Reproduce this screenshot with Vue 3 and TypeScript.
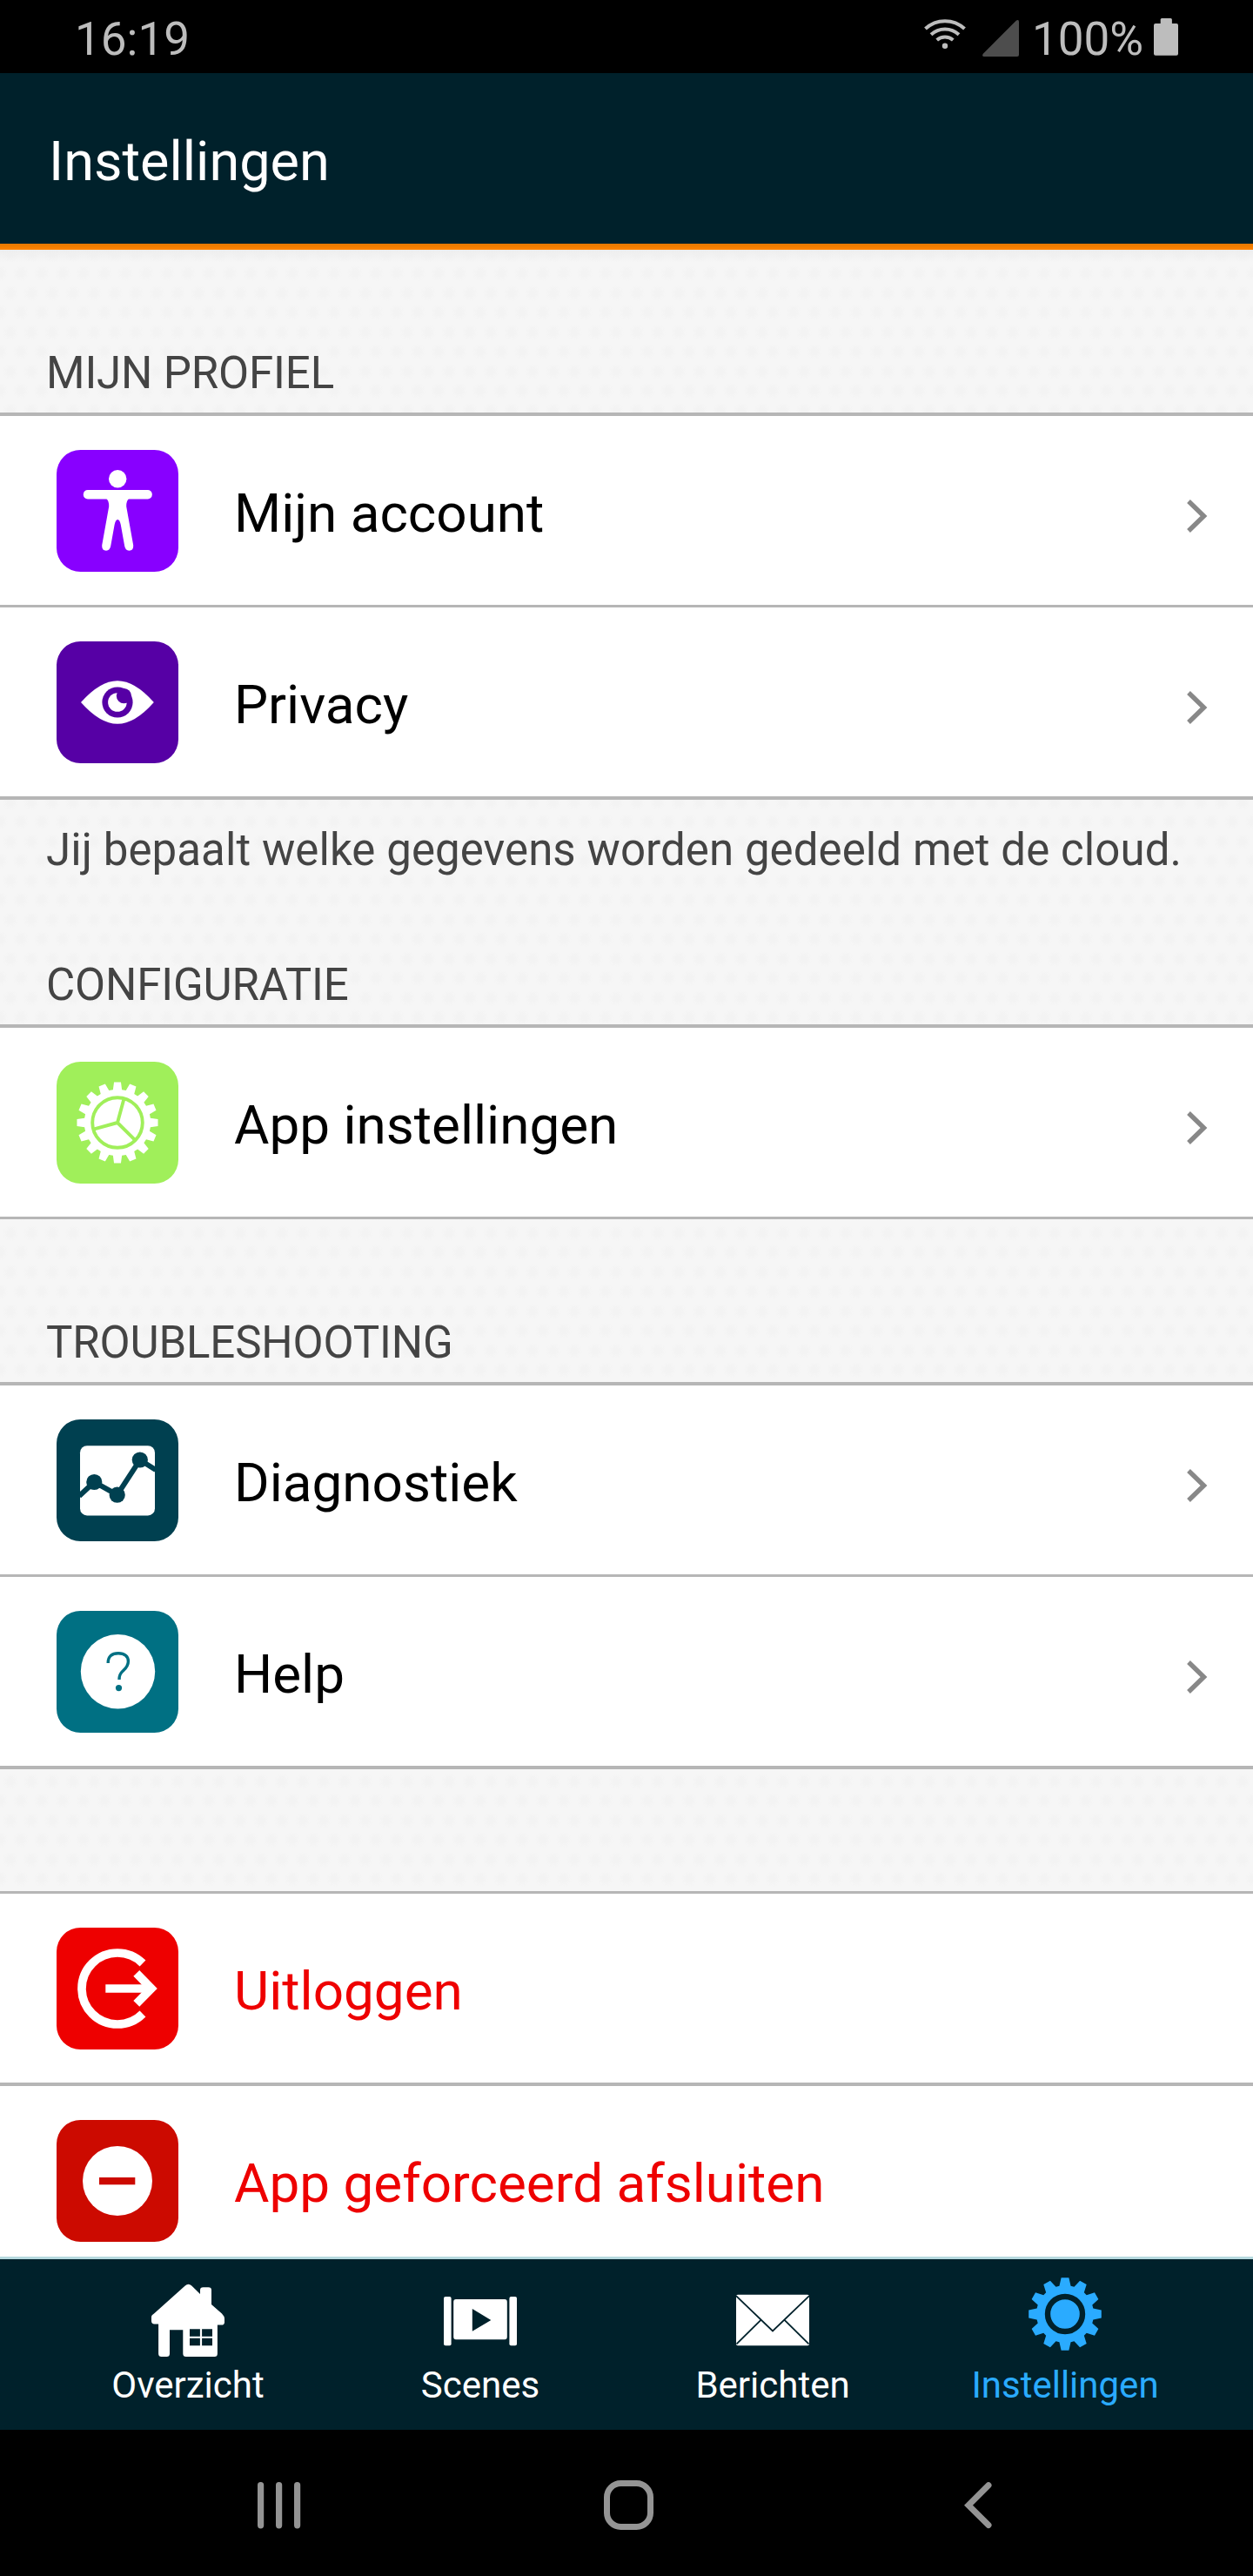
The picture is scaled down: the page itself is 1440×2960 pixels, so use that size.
<script setup lang="ts">
type IconName = 'person' | 'eye' | 'gear' | 'chart' | 'help' | 'logout' | 'minus'

interface Row {
  label: string
  icon: IconName
  color: string
  danger?: boolean
}

interface Section {
  id: string
  title?: string
  note?: string
  rows: Row[]
}

const sections: Section[] = [
  {
    id: 'profile',
    title: 'MIJN PROFIEL',
    note: 'Jij bepaalt welke gegevens worden gedeeld met de cloud.',
    rows: [
      { label: 'Mijn account', icon: 'person', color: '#8800ff' },
      { label: 'Privacy', icon: 'eye', color: '#5600a5' },
    ],
  },
  {
    id: 'config',
    title: 'CONFIGURATIE',
    rows: [{ label: 'App instellingen', icon: 'gear', color: '#a0ef5a' }],
  },
  {
    id: 'trouble',
    title: 'TROUBLESHOOTING',
    rows: [
      { label: 'Diagnostiek', icon: 'chart', color: '#004050' },
      { label: 'Help', icon: 'help', color: '#007083' },
    ],
  },
  {
    id: 'session',
    rows: [
      { label: 'Uitloggen', icon: 'logout', color: '#ee0000', danger: true },
      { label: 'App geforceerd afsluiten', icon: 'minus', color: '#cc0a00', danger: true },
    ],
  },
]

const tabs = [
  { id: 'home', label: 'Overzicht' },
  { id: 'scenes', label: 'Scenes' },
  { id: 'mail', label: 'Berichten' },
  { id: 'settings', label: 'Instellingen' },
]

// Outline of a cog wheel: trapezoid teeth on a round body.
function cog(cx: number, cy: number, teeth: number, outer: number, inner: number, top: number, base: number): string {
  const points: string[] = []
  const at = (r: number, a: number) =>
    points.push(`${(cx + r * Math.sin(a)).toFixed(2)},${(cy - r * Math.cos(a)).toFixed(2)}`)
  for (let i = 0; i < teeth; i++) {
    const a = (i * 2 * Math.PI) / teeth
    at(inner, a - base)
    at(outer, a - top)
    at(outer, a + top)
    at(inner, a + base)
  }
  return points.join(' ')
}

const appCog = cog(70, 70, 16, 46.7, 38.2, 0.085, 0.135)
const tabCog = cog(42, 35, 12, 42, 33, 0.105, 0.2)
</script>

<template>
  <div class="phone">
    <div class="status">
      <span class="clock">16:19</span>
      <svg class="wifi" width="48" height="36" viewBox="0 0 48 36" fill="none" stroke="#bdbdbd" stroke-width="4">
        <path d="M1.5 12 A33 33 0 0 1 46.5 12" />
        <path d="M8 18.8 A23.5 23.5 0 0 1 40 18.8" />
        <path d="M14.7 25 A14 14 0 0 1 33.3 25" />
        <circle cx="24" cy="31.8" r="3.2" fill="#bdbdbd" stroke="none" />
      </svg>
      <svg class="signal" width="42" height="42" viewBox="0 0 42 42">
        <path d="M39 0.5 Q42 -1 42 2 V40 Q42 42 40 42 H2 Q-1 42 0.8 38.8Z" fill="#4d4d4d" />
      </svg>
      <span class="percent">100%</span>
      <svg class="battery" width="28" height="43" viewBox="0 0 28 43" fill="#bdbdbd">
        <rect x="7.7" y="0" width="13.2" height="10" rx="1.5" />
        <rect x="0" y="6" width="28" height="36.7" rx="2" />
      </svg>
    </div>

    <header class="bar"><h1>Instellingen</h1></header>

    <main class="content">
      <section v-for="s in sections" :key="s.id" :class="['section', s.id]">
        <h2 v-if="s.title">{{ s.title }}</h2>
        <ul>
          <li v-for="row in s.rows" :key="row.label" :class="{ danger: row.danger }">
            <svg class="icon" width="140" height="140" viewBox="0 0 140 140">
              <rect width="140" height="140" rx="27.5" :fill="row.color" />
              <g v-if="row.icon === 'person'" fill="#fff">
                <circle cx="70.2" cy="33.2" r="10.2" />
                <rect x="30.8" y="46" width="79" height="10.5" rx="5" />
                <path d="M56 55 Q60.4 57.5 60.2 65 L52.2 109.5 Q51.8 115.7 57 115.7 Q61.5 115.7 62.3 110 L66.6 86 Q67.8 80 70.2 80 Q72.6 80 73.8 86 L78.1 110 Q78.9 115.7 83.4 115.7 Q88.6 115.7 88.2 109.5 L80.2 65 Q80 57.5 84.4 55Z" />
              </g>
              <g v-else-if="row.icon === 'eye'">
                <path d="M28 70 Q50 45.2 70 45.2 Q90 45.2 111.8 70 Q90 94.8 70 94.8 Q50 94.8 28 70Z" fill="#fff" />
                <circle cx="70" cy="70" r="17.6" :fill="row.color" />
                <circle cx="69.9" cy="70" r="10.8" fill="#fff" />
                <circle cx="77.4" cy="62.6" r="8.6" :fill="row.color" />
              </g>
              <g v-else-if="row.icon === 'gear'">
                <polygon :points="appCog" fill="#fff" />
                <g fill="none" :stroke="row.color" stroke-width="3.9">
                  <circle cx="70" cy="70" r="28.8" />
                  <path d="M70 70 L77.5 42.5 M70 70 L42.4 77.6 M70 70 L90.6 90.3" />
                </g>
              </g>
              <g v-else-if="row.icon === 'chart'">
                <rect x="27" y="30.2" width="86" height="80.2" rx="8" fill="#fff" />
                <path d="M26 88 L43.3 72 L69.7 86.7 L95.8 46.5 L114 58" fill="none" :stroke="row.color" stroke-width="6" />
                <g :fill="row.color">
                  <circle cx="43.3" cy="72" r="9.1" />
                  <circle cx="69.7" cy="86.7" r="9.1" />
                  <circle cx="95.8" cy="46.5" r="9.1" />
                </g>
              </g>
              <g v-else-if="row.icon === 'help'">
                <circle cx="70.5" cy="69.7" r="42.7" fill="#fff" />
                <path d="M59.2 60 C59 52.5 63.5 48.7 71 48.7 C78.5 48.7 82.4 52.5 82.4 58 C82.4 63.5 79.5 66 76.5 68.8 C73 72 72 74 72 79" fill="none" :stroke="row.color" stroke-width="3.4" />
                <circle cx="71.5" cy="88.6" r="3.6" :fill="row.color" />
              </g>
              <g v-else-if="row.icon === 'logout'" fill="none" stroke="#fff" stroke-width="9.7">
                <path d="M99 41 A41 41 0 1 0 99 99" />
                <path d="M56.3 70 H108" />
                <path d="M91.8 52.4 L109 69.9 L91.8 87.4" />
              </g>
              <g v-else>
                <circle cx="70" cy="70" r="40" fill="#fff" />
                <rect x="49" y="66" width="41.3" height="8.3" :fill="row.color" />
              </g>
            </svg>
            <span class="label">{{ row.label }}</span>
            <svg v-if="!row.danger" class="chevron" width="24" height="40" viewBox="0 0 24 40" fill="none" stroke="#888" stroke-width="5.4">
              <path d="M2 3 L19.5 20 L2 37" />
            </svg>
          </li>
        </ul>
        <p v-if="s.note">{{ s.note }}</p>
      </section>
    </main>

    <nav class="tabs">
      <div v-for="tab in tabs" :key="tab.id" :class="['tab', { active: tab.id === 'settings' }]">
        <svg width="84" height="84" viewBox="0 0 84 84" fill="#fff">
          <template v-if="tab.id === 'home'">
            <path fill-rule="evenodd" d="M38.7 2.6 Q42.5 -1 46.3 2.6 L56 12 V7.5 Q56 4.3 59.5 4.3 H65.5 Q69 4.3 69 7.5 V24 L81 34.5 Q84 37.5 84 40.5 V44.5 Q84 47.6 80.5 47.6 H75.9 V80.5 Q75.9 84 72.5 84 H39.8 Q36.3 84 36.3 80.5 V53.3 H21 V80.5 Q21 84 17.5 84 H11.6 Q8.1 84 8.1 80.5 V46.4 H3.5 Q0 46.4 0 43 V38 Q0 36 3 34.5Z M44 52.3 V60.7 H55.9 V52.3Z M58.1 52.3 V60.7 H70 V52.3Z M44 62.8 V71.3 H55.9 V62.8Z M58.1 62.8 V71.3 H70 V62.8Z" />
          </template>
          <template v-else-if="tab.id === 'scenes'">
            <rect x="0" y="15" width="8.6" height="56.3" rx="2" />
            <rect x="75.4" y="15" width="8.6" height="56.3" rx="2" />
            <path fill-rule="evenodd" d="M14 18 H70 Q72.8 18 72.8 21 V61.3 Q72.8 64.3 70 64.3 H14 Q11.2 64.3 11.2 61.3 V21 Q11.2 18 14 18Z M32.8 29 V54.8 L54.3 42Z" />
          </template>
          <template v-else-if="tab.id === 'mail'">
            <rect x="0" y="12.8" width="84" height="58.5" rx="2" />
            <path d="M0 14.2 L42 54.4 L84 14.2 M0.5 69.3 L28.4 41.8 M83.5 69.3 L55.6 41.8" fill="none" stroke="#00212b" stroke-width="1.8" />
          </template>
          <g v-else fill="#2aabff">
            <polygon :points="tabCog" />
            <circle cx="42" cy="35" r="20" fill="none" stroke="#00212b" stroke-width="6.4" />
          </g>
        </svg>
        <span>{{ tab.label }}</span>
      </div>
    </nav>

    <div class="system">
      <svg width="50" height="54" viewBox="0 0 50 54" fill="#949494">
        <rect x="0" y="0" width="7.2" height="53.4" rx="3.6" />
        <rect x="21" y="0" width="7.2" height="53.4" rx="3.6" />
        <rect x="42" y="0" width="7.2" height="53.4" rx="3.6" />
      </svg>
      <svg class="home-key" width="57" height="57" viewBox="0 0 57 57" fill="none" stroke="#949494" stroke-width="7">
        <rect x="3.5" y="3.5" width="50" height="50" rx="16" />
      </svg>
      <svg class="back-key" width="32" height="54" viewBox="0 0 32 54" fill="none" stroke="#949494" stroke-width="7" stroke-linecap="round">
        <path d="M28 3.8 L5 26.7 L28 49.6" />
      </svg>
    </div>
  </div>
</template>

<style>
body {
  margin: 0;
  background: #000;
}
</style>

<style scoped>
.phone {
  display: flex;
  flex-direction: column;
  width: 1440px;
  height: 2960px;
  overflow: hidden;
  background: #000;
  font-family: Roboto, sans-serif;
}

.status {
  display: flex;
  align-items: flex-start;
  box-sizing: border-box;
  height: 84px;
  flex: none;
  padding-left: 86px;
  color: #bdbdbd;
  font-size: 53px;
  line-height: 90px;
}
.clock {
  width: 976px;
}
.wifi {
  margin-top: 21px;
}
.signal {
  margin: 23px 0 0 19px;
}
.percent {
  width: 140px;
  margin-left: 15px;
}
.battery {
  margin-top: 21px;
}

.bar {
  flex: none;
  height: 196px;
  padding-left: 56px;
  background: #00212b;
  color: #fff;
}
.bar h1 {
  margin: 0;
  font-size: 63px;
  font-weight: 400;
  line-height: 203px;
}

.content {
  flex: 1;
  min-height: 0;
  overflow: hidden;
  border-bottom: 3px solid #b6d9df;
  background:
    linear-gradient(#e67700, #ff8400) 0 0 / 100% 7px no-repeat,
    linear-gradient(#eeeeee, rgba(245, 245, 245, 0)) 0 7px / 100% 14px no-repeat,
    radial-gradient(circle at 12px 12px, #f3f3f3 3px, rgba(243, 243, 243, 0) 9px) 0 0 / 24px 45px,
    radial-gradient(circle at 12px 12px, #f3f3f3 3px, rgba(243, 243, 243, 0) 9px) 12px 22px / 24px 45px,
    #f6f6f6;
}

.section h2 {
  margin: 0;
  padding: 0 0 15px 53px;
  color: #444;
  font-size: 51px;
  font-weight: 400;
  line-height: 61px;
  letter-spacing: -0.15px;
}
.profile {
  padding-top: 118px;
}
.config {
  padding-top: 93px;
}
.trouble {
  padding-top: 111px;
}
.session {
  padding-top: 140px;
}

.section ul {
  margin: 0;
  padding: 0;
  list-style: none;
  border-top: 4px solid #b6b6b6;
  border-bottom: 3px solid #b6b6b6;
  background: #fff;
}
.profile ul,
.trouble ul {
  border-bottom-width: 4px;
}
.session ul {
  border-top-width: 3px;
}
.section li {
  display: flex;
  align-items: center;
  height: 217px;
  padding-left: 65px;
  color: #000;
}
.section li + li {
  border-top: 3px solid #b6b6b6;
}
.session li + li {
  border-top-width: 4px;
}
.section li.danger {
  color: #ee0000;
}
.icon {
  flex: none;
  margin-top: 1px;
}
.label {
  flex: 1;
  padding: 7px 0 0 64px;
  font-size: 62px;
  line-height: 80px;
  white-space: nowrap;
}
.chevron {
  flex: none;
  margin: 12px 52px 0 0;
}
.section p {
  margin: 0;
  padding: 27px 0 0 53px;
  color: #444;
  font-size: 51px;
  line-height: 62px;
  letter-spacing: 0.08px;
  white-space: nowrap;
}

.tabs {
  display: flex;
  flex: none;
  height: 196px;
  padding: 0 48px;
  background: #00212b;
  color: #fff;
}
.tab {
  display: flex;
  flex-direction: column;
  align-items: center;
  width: 336px;
  padding-top: 28px;
}
.tab svg {
  overflow: visible;
}
.tab span {
  margin-top: 8px;
  font-size: 42px;
  line-height: 50px;
}
.tab.active {
  color: #2aabff;
}

.system {
  display: flex;
  flex: none;
  align-items: center;
  box-sizing: border-box;
  height: 168px;
  padding: 5px 0 0 296px;
}
.home-key {
  margin-left: 348px;
}
.back-key {
  margin-left: 357px;
}
</style>
